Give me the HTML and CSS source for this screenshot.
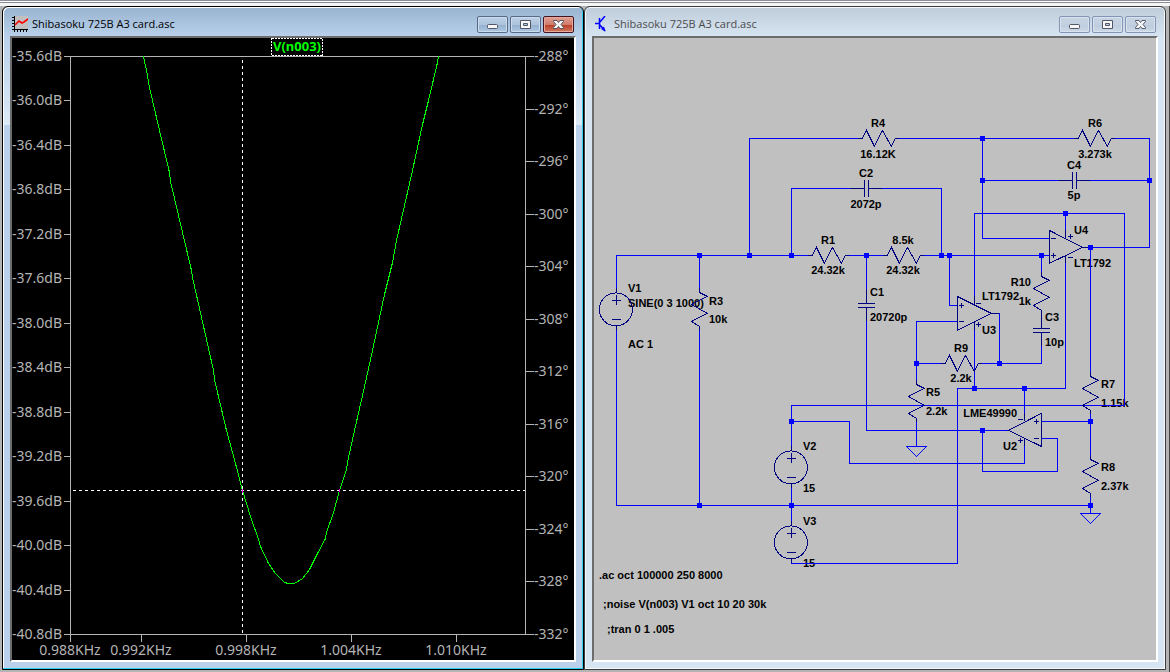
FILE: index.html
```html
<!DOCTYPE html>
<html lang="en">
<head>
    <meta charset="UTF-8">
    <meta name="viewport" content="width=device-width, initial-scale=1.0">
    <title>Shibasoku 725B A3 card.asc</title>
    <link rel="stylesheet" href="styles.css">
</head>
<body>
    <div class="toolbar-edge"></div>
    <main class="workspace">
        <section class="window active">
            <header class="titlebar">
                <svg class="app-icon" viewBox="0 0 16 16" aria-hidden="true">
                    <rect x="2" y="0" width="14" height="13" fill="#c0c0c0"/>
                    <path d="M2.5 0V16M0 13.5H16M0 1.5H2M0 4.5H2M0 7.5H2M0 10.5H2M5.5 14V16M8.5 14V16M11.5 14V16M14.5 14V16" stroke="#000" fill="none"/>
                    <path d="M3 9L7 5L10 7L12 6L16 3" stroke="#f00" stroke-width="1.6" fill="none"/>
                </svg>
                <h1 class="title">Shibasoku 725B A3 card.asc</h1>
                <button class="win-btn" aria-label="Minimize"><svg viewBox="0 0 13 11"><rect x="1.5" y="5.5" width="10" height="4" rx="1"/></svg></button>
                <button class="win-btn" aria-label="Maximize"><svg viewBox="0 0 13 11"><path fill-rule="evenodd" d="M1.5 1.5h10v8h-10zM4.5 4.5v2h4v-2z"/></svg></button>
                <button class="win-btn close" aria-label="Close"><svg viewBox="0 0 13 11"><path d="M1.5 1.5h3.5l1.5 2l1.5-2h3.5v1l-2.500 3l2.500 3v1h-3.500l-1.500-2l-1.500 2h-3.500v-1l2.500-3l-2.500-3z"/></svg></button>
            </header>
            <div class="client plot">
                <svg class="drawing" viewBox="12 38 562 622" preserveAspectRatio="xMinYMin meet" role="img" aria-label="V(n003) frequency response">
                    <!-- axes and ticks -->
                    <g class="axis" transform="translate(.5 .5)">
                        <path d="M63 56H533M70 56V641M525 56V634M63 634H533"/>
                        <path d="M63 100h7M63 145h7M63 189h7M63 234h7M63 278h7M63 323h7M63 367h7M63 412h7M63 456h7M63 501h7M63 545h7M63 590h7"/>
                        <path d="M525 109h8M525 161h8M525 214h8M525 266h8M525 319h8M525 371h8M525 424h8M525 476h8M525 529h8M525 581h8"/>
                        <path d="M141 634v7M246 634v7M351 634v7M456 634v7"/>
                    </g>
                    <g class="scale left">
                        <text x="62" y="61">-35.6dB</text>
                        <text x="62" y="105">-36.0dB</text>
                        <text x="62" y="150">-36.4dB</text>
                        <text x="62" y="194">-36.8dB</text>
                        <text x="62" y="239">-37.2dB</text>
                        <text x="62" y="283">-37.6dB</text>
                        <text x="62" y="328">-38.0dB</text>
                        <text x="62" y="372">-38.4dB</text>
                        <text x="62" y="417">-38.8dB</text>
                        <text x="62" y="461">-39.2dB</text>
                        <text x="62" y="506">-39.6dB</text>
                        <text x="62" y="550">-40.0dB</text>
                        <text x="62" y="595">-40.4dB</text>
                        <text x="62" y="639">-40.8dB</text>
                    </g>
                    <g class="scale">
                        <text x="534" y="61">-288°</text>
                        <text x="534" y="114">-292°</text>
                        <text x="534" y="166">-296°</text>
                        <text x="534" y="219">-300°</text>
                        <text x="534" y="271">-304°</text>
                        <text x="534" y="324">-308°</text>
                        <text x="534" y="376">-312°</text>
                        <text x="534" y="429">-316°</text>
                        <text x="534" y="481">-320°</text>
                        <text x="534" y="534">-324°</text>
                        <text x="534" y="586">-328°</text>
                        <text x="534" y="639">-332°</text>
                    </g>
                    <g class="scale bottom">
                        <text x="70" y="655">0.988KHz</text>
                        <text x="141" y="655">0.992KHz</text>
                        <text x="246" y="655">0.998KHz</text>
                        <text x="351" y="655">1.004KHz</text>
                        <text x="456" y="655">1.010KHz</text>
                    </g>
                    <!-- trace -->
                    <path class="trace" transform="translate(.5 .5)" d="M143 56L147 75L149 87L159 130L169 172L170 181L191 270L192 277L213 370L214 379L226 430L235 463L242 490L250 516L258 539L260 546L268 563L275 573L284 582L288 583H294L302 578L309 569L317 553L325 538L326 532L333 512L339 490L346 469L348 457L354 430L362 395L372 350L384 294L392 262L396 240L412 170L422 124L428 100L437 62L438 56"/>
                    <path class="cursor" d="M242.500 60V634M73 490.500H525"/>
                    <path class="hit" d="M242.500 489V493M339.500 489V492"/>
                    <rect class="label-box" x="271.500" y="38.500" width="51" height="17"/>
                    <text class="trace-name" x="297" y="51">V(n003)</text>
                </svg>
            </div>
        </section>

        <section class="window">
            <header class="titlebar">
                <svg class="app-icon" viewBox="0 0 16 16" aria-hidden="true">
                    <path d="M1 7.500H5M5.500 2V13M6 6L11 0M6 9L11 15" stroke="#00f" stroke-width="1.500" fill="none"/>
                    <path d="M11.500 15.500L7 13L10 10.500z" fill="#00f"/>
                </svg>
                <h2 class="title">Shibasoku 725B A3 card.asc</h2>
                <button class="win-btn" aria-label="Minimize"><svg viewBox="0 0 13 11"><rect x="1.5" y="5.5" width="10" height="4" rx="1"/></svg></button>
                <button class="win-btn" aria-label="Maximize"><svg viewBox="0 0 13 11"><path fill-rule="evenodd" d="M1.5 1.5h10v8h-10zM4.5 4.5v2h4v-2z"/></svg></button>
                <button class="win-btn" aria-label="Close"><svg viewBox="0 0 13 11"><path d="M1.5 1.5h3.5l1.5 2l1.5-2h3.5v1l-2.500 3l2.500 3v1h-3.500l-1.500-2l-1.500 2h-3.500v-1l2.500-3l-2.500-3z"/></svg></button>
            </header>
            <div class="client schematic">
                <svg class="drawing" viewBox="594 38 562 622" preserveAspectRatio="xMinYMin meet" role="img" aria-label="Circuit schematic">
                    <defs>
                        <path id="res-h" d="M-4 0H0L4 -8L12 8L20 -8L29 8L33 0H37"/>
                        <path id="res-v" d="M0 -4V0L8 4L-8 12L8 21L-8 29L0 34V38"/>
                        <path id="cap-h" d="M-16 0H-2M2 0H16M-2 -8V9M2 -8V9"/>
                        <path id="cap-v" d="M0 -16V-2M0 2V16M-8 -2H9M-8 2H9"/>
                        <g id="source">
                            <circle cx="-.5" cy="0" r="16.500"/>
                            <path d="M0 -21V-17M0 17V21M-4 -9H5M0 -14V-4M-4 10H5"/>
                        </g>
                        <path id="gnd" d="M-10 0H10L0 10Z"/>
                    </defs>

                    <g class="labels">
                        <text x="628" y="292">V1</text>
                        <text x="628" y="307">SINE(0 3 1000)</text>
                        <text x="628" y="348">AC 1</text>
                        <text x="709" y="305">R3</text>
                        <text x="709" y="323">10k</text>
                        <text x="870" y="296">C1</text>
                        <text x="870" y="321">20720p</text>
                        <text x="1074" y="234">U4</text>
                        <text x="1074" y="267">LT1792</text>
                        <text x="982" y="300">LT1792</text>
                        <text x="982" y="334">U3</text>
                        <text x="1045" y="321">C3</text>
                        <text x="1045" y="346">10p</text>
                        <text x="926" y="396">R5</text>
                        <text x="926" y="415">2.2k</text>
                        <text x="1101" y="388">R7</text>
                        <text x="1101" y="407">1.15k</text>
                        <text x="1101" y="471">R8</text>
                        <text x="1101" y="490">2.37k</text>
                        <text x="803" y="450">V2</text>
                        <text x="803" y="492">15</text>
                        <text x="803" y="525">V3</text>
                        <text x="803" y="567">15</text>
                        <text x="599" y="579">.ac oct 100000 250 8000</text>
                        <text x="603" y="608">;noise V(n003) V1 oct 10 20 30k</text>
                        <text x="607" y="633">;tran 0 1 .005</text>
                    </g>
                    <g class="labels middle">
                        <text x="878" y="127">R4</text>
                        <text x="878" y="158">16.12K</text>
                        <text x="866" y="177">C2</text>
                        <text x="866" y="208">2072p</text>
                        <text x="828" y="244">R1</text>
                        <text x="828" y="274">24.32k</text>
                        <text x="903" y="244">8.5k</text>
                        <text x="903" y="274">24.32k</text>
                        <text x="1095" y="127">R6</text>
                        <text x="1095" y="158">3.273k</text>
                        <text x="1074" y="169">C4</text>
                        <text x="1074" y="199">5p</text>
                        <text x="961" y="352">R9</text>
                        <text x="961" y="382">2.2k</text>
                    </g>
                    <g class="labels end">
                        <text x="1031" y="286">R10</text>
                        <text x="1031" y="305">1k</text>
                        <text x="1017" y="417">LME49990</text>
                        <text x="1017" y="450">U2</text>
                    </g>

                    <g class="wires" transform="translate(.4 .4)">
                        <!-- input network -->
                        <path d="M616 288V255H808M699 255V288M699 330V505M616 330V505H1090"/>
                        <path d="M749 255V138H858M899 138H1074M1115 138H1149V247H1090"/>
                        <path d="M791 255V188H850M882 188H941V255M849 255H883M924 255H1049"/>
                        <path d="M866 255V289M866 321V430H1007"/>
                        <!-- op-amp inputs and feedback -->
                        <path d="M982 138V238H1049M982 180H1058M1090 180H1149"/>
                        <path d="M949 255V305H957M957 321H916V380M916 363H941M916 422V446"/>
                        <path d="M991 313H999V363M982 363H1041V346M1041 255V272"/>
                        <path d="M1090 247V372M1090 414V455M1090 497V513M1090 421H1041"/>
                        <path d="M1041 438H1057V471H982V430"/>
                        <!-- supply rails -->
                        <path d="M974 301V213H1124V405H791V446M974 324V388M1065 213V239M1065 256V388H957V563H791V559"/>
                        <path d="M1024 388V421M1024 438V463H849V421H791M791 488V521"/>
                        <use href="#gnd" x="916" y="446"/>
                        <use href="#gnd" x="1090" y="513"/>
                    </g>

                    <g class="parts" transform="translate(.4 .4)">
                        <use href="#res-h" x="862" y="138"/>
                        <use href="#res-h" x="1078" y="138"/>
                        <use href="#res-h" x="812" y="255"/>
                        <use href="#res-h" x="887" y="255"/>
                        <use href="#res-h" x="945" y="363"/>
                        <use href="#res-v" x="699" y="292"/>
                        <use href="#res-v" x="1041" y="276"/>
                        <use href="#res-v" x="916" y="384"/>
                        <use href="#res-v" x="1090" y="376"/>
                        <use href="#res-v" x="1090" y="459"/>
                        <use href="#cap-h" x="866" y="188"/>
                        <use href="#cap-h" x="1074" y="180"/>
                        <use href="#cap-v" x="866" y="305"/>
                        <use href="#cap-v" x="1041" y="330"/>
                        <use href="#source" x="616" y="309"/>
                        <use href="#source" x="791" y="467"/>
                        <use href="#source" x="791" y="542"/>
                        <!-- U4 -->
                        <path d="M1049 230V263L1082 247ZM1082 247H1090M1065 230V239M1065 255V263"/>
                        <path d="M1051 238h5M1051 255h5M1053 253v5M1068 236h5M1070 234v5M1068 257h5"/>
                        <!-- U3 -->
                        <path d="M957 296V330L991 313ZM991 313H999M974 296V304M974 322V330"/>
                        <path d="M959 305h5M961 303v5M959 321h5M976 303h5M976 324h5M978 322v5"/>
                        <!-- U2 -->
                        <path d="M1041 413V446L1008 430ZM1024 413V421M1024 438V446"/>
                        <path d="M1034 421h5M1036 419v5M1034 438h5M1018 419h5M1018 440h5M1020 438v5"/>
                    </g>

                    <!-- junction dots, 5px squares drawn as square line caps -->
                    <path class="dots" transform="translate(.5 .5)" d="M699 255h0M749 255h0M791 255h0M866 255h0M941 255h0M949 255h0M1041 255h0M982 138h0M982 180h0M1149 180h0M1065 213h0M1090 247h0M916 363h0M999 363h0M974 388h0M1024 388h0M982 430h0M1090 421h0M791 421h0M699 505h0M791 505h0M1090 505h0"/>
                </svg>
            </div>
        </section>
    </main>
</body>
</html>
```
FILE: styles.css
```css
* {
    box-sizing: border-box;
}

body {
    margin: 0;
    height: 100vh;
    display: flex;
    flex-direction: column;
    background: #f0f0f0;
    font-family: "Open Sans", "Noto Sans", sans-serif;
}

.toolbar-edge {
    height: 6px;
    border-bottom: 3px solid #f4f4f4;
    background: linear-gradient(#8a8c98 1px, #fff 1px, #fff 2px, #8a8c98 2px);
}

.workspace {
    flex: 1;
    min-height: 0;
    display: flex;
    padding: 0 3px 2px 2px;
    border-right: 1px solid #444;
    background: #b4b4b4;
}

.window {
    flex: 1;
    min-width: 0;
    display: flex;
    flex-direction: column;
    /* 6px frame plus the inner highlight line */
    padding: 1px 7px 7px;
    border: 1px solid #3c3c3c;
    border-radius: 6px 6px 0 0;
    background: linear-gradient(#bfcddb, #d7e4f2 30px);
    box-shadow: inset 0 0 0 1px #f4f8fc;
}

.window.active {
    border-color: #000;
    background: linear-gradient(#99b4d1, #b9d1ea 30px, #dce9f6 118px, #b9d1ea 118px);
    box-shadow: inset -1px -1px 0 #2fd0f0, inset 1px 1px 0 #fff;
}

.titlebar {
    display: flex;
    align-items: center;
    gap: 2px;
    height: 28px;
    padding: 4px 2px 0;
}

.app-icon {
    width: 16px;
    height: 16px;
    margin-right: 2px;
}

.title {
    flex: 1;
    margin: 0;
    font-size: 11px;
    font-weight: normal;
    line-height: 16px;
    white-space: nowrap;
    color: #4c4c4c;
}

.active .title {
    color: #000;
}

.win-btn {
    display: flex;
    align-items: center;
    justify-content: center;
    width: 31px;
    height: 17px;
    padding: 0;
    border: 1px solid #8494b4;
    border-radius: 2px;
    background: linear-gradient(#c6d3e2, #c2d0e0 50%, #bccbdd 50%, #cbd8e7);
    box-shadow: inset 0 0 0 1px #d8e3ef;
}

.active .win-btn {
    border-color: #586a88;
    background: linear-gradient(#bdd0e5, #adc4dd 50%, #93afcd 50%, #adc8e3);
    box-shadow: inset 0 0 0 1px #cbdced;
}

.active .win-btn.close {
    border-color: #431522;
    background: linear-gradient(#e0a092, #d17c6c 50%, #b73a22 50%, #d27a62);
    box-shadow: inset 0 0 0 1px #e6aa9c;
}

.win-btn svg {
    width: 13px;
    height: 11px;
    fill: #f6f6f6;
    stroke: #535666;
}

.client {
    flex: 1;
    min-height: 0;
    border: 2px solid;
    border-color: #6c6c6c #fff #fff #6c6c6c;
}

.plot {
    background: #000;
}

.schematic {
    background: #c0c0c0;
}

.drawing {
    display: block;
    width: 100%;
    height: 100%;
}

/* waveform pane */
.axis,
.trace,
.cursor,
.hit,
.label-box {
    fill: none;
    stroke: #b4b4b4;
    shape-rendering: crispEdges;
}

.trace {
    stroke: #0f0;
}

.cursor {
    stroke: #fff;
    stroke-dasharray: 3 3;
}

.hit {
    stroke: #f0f;
}

.label-box {
    stroke: #fff;
    stroke-dasharray: 2 1;
}

.scale {
    font-family: "Noto Sans", sans-serif;
    font-size: 14px;
    fill: #b4b4b4;
}

.scale.left {
    text-anchor: end;
}

.scale.bottom {
    text-anchor: middle;
}

.trace-name {
    font-family: "Noto Sans", sans-serif;
    font-size: 13px;
    font-weight: bold;
    text-anchor: middle;
    fill: #0f0;
}

/* schematic pane */
.labels {
    font-family: "Liberation Sans", Arial, sans-serif;
    font-size: 11px;
    font-weight: bold;
    fill: #000;
}

.labels.middle {
    text-anchor: middle;
}

.labels.end {
    text-anchor: end;
}

.wires,
.parts,
.dots {
    fill: none;
    stroke: #00f;
    shape-rendering: crispEdges;
}

.parts {
    stroke: #000080;
}

.dots {
    stroke-width: 5px;
    stroke-linecap: square;
}
```
